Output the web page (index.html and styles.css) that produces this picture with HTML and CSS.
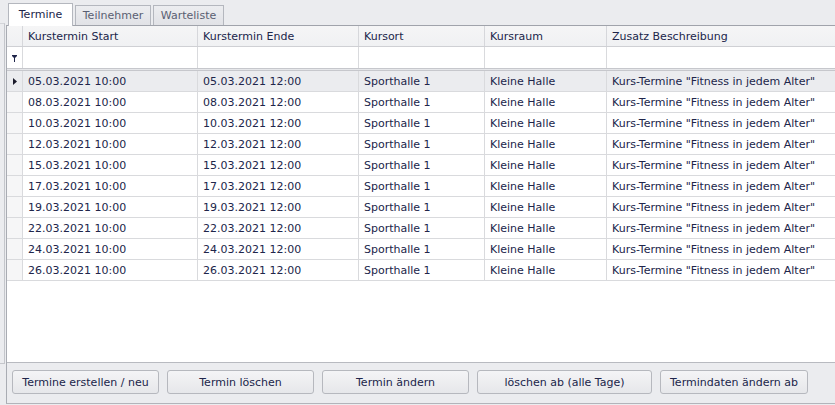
FILE: index.html
```html
<!DOCTYPE html>
<html lang="de">
<head>
<meta charset="utf-8">
<title>Termine</title>
<link rel="stylesheet" href="styles.css">
</head>
<body>
<div class="window">
  <div class="side"></div>
  <div class="main">
    <div class="tabs">
      <div class="tab active t1">Termine</div>
      <div class="tab t2">Teilnehmer</div>
      <div class="tab t3">Warteliste</div>
    </div>
    <div class="panel">
      <div class="grid">
        <div class="row head">
          <div class="cell ind"></div>
          <div class="cell">Kurstermin Start</div>
          <div class="cell">Kurstermin Ende</div>
          <div class="cell">Kursort</div>
          <div class="cell">Kursraum</div>
          <div class="cell">Zusatz Beschreibung</div>
        </div>
        <div class="row filter">
          <div class="cell ind"><svg width="5" height="7" viewBox="0 0 5 7"><polygon points="0,0 5,0 5,1 3,3 3,7 2,7 2,3 0,1" fill="#20254a"/></svg></div>
          <div class="cell"></div>
          <div class="cell"></div>
          <div class="cell"></div>
          <div class="cell"></div>
          <div class="cell"></div>
        </div>
        <div class="sep"></div>
        <div class="row data selected">
          <div class="cell ind"><svg width="4" height="7" viewBox="0 0 4 7"><polygon points="0,0 4,3.5 0,7" fill="#1a1a2a"/></svg></div>
          <div class="cell">05.03.2021 10:00</div><div class="cell">05.03.2021 12:00</div><div class="cell">Sporthalle 1</div><div class="cell">Kleine Halle</div><div class="cell">Kurs-Termine "Fitness in jedem Alter"</div>
        </div>
        <div class="row data">
          <div class="cell ind"></div>
          <div class="cell">08.03.2021 10:00</div><div class="cell">08.03.2021 12:00</div><div class="cell">Sporthalle 1</div><div class="cell">Kleine Halle</div><div class="cell">Kurs-Termine "Fitness in jedem Alter"</div>
        </div>
        <div class="row data">
          <div class="cell ind"></div>
          <div class="cell">10.03.2021 10:00</div><div class="cell">10.03.2021 12:00</div><div class="cell">Sporthalle 1</div><div class="cell">Kleine Halle</div><div class="cell">Kurs-Termine "Fitness in jedem Alter"</div>
        </div>
        <div class="row data">
          <div class="cell ind"></div>
          <div class="cell">12.03.2021 10:00</div><div class="cell">12.03.2021 12:00</div><div class="cell">Sporthalle 1</div><div class="cell">Kleine Halle</div><div class="cell">Kurs-Termine "Fitness in jedem Alter"</div>
        </div>
        <div class="row data">
          <div class="cell ind"></div>
          <div class="cell">15.03.2021 10:00</div><div class="cell">15.03.2021 12:00</div><div class="cell">Sporthalle 1</div><div class="cell">Kleine Halle</div><div class="cell">Kurs-Termine "Fitness in jedem Alter"</div>
        </div>
        <div class="row data">
          <div class="cell ind"></div>
          <div class="cell">17.03.2021 10:00</div><div class="cell">17.03.2021 12:00</div><div class="cell">Sporthalle 1</div><div class="cell">Kleine Halle</div><div class="cell">Kurs-Termine "Fitness in jedem Alter"</div>
        </div>
        <div class="row data">
          <div class="cell ind"></div>
          <div class="cell">19.03.2021 10:00</div><div class="cell">19.03.2021 12:00</div><div class="cell">Sporthalle 1</div><div class="cell">Kleine Halle</div><div class="cell">Kurs-Termine "Fitness in jedem Alter"</div>
        </div>
        <div class="row data">
          <div class="cell ind"></div>
          <div class="cell">22.03.2021 10:00</div><div class="cell">22.03.2021 12:00</div><div class="cell">Sporthalle 1</div><div class="cell">Kleine Halle</div><div class="cell">Kurs-Termine "Fitness in jedem Alter"</div>
        </div>
        <div class="row data">
          <div class="cell ind"></div>
          <div class="cell">24.03.2021 10:00</div><div class="cell">24.03.2021 12:00</div><div class="cell">Sporthalle 1</div><div class="cell">Kleine Halle</div><div class="cell">Kurs-Termine "Fitness in jedem Alter"</div>
        </div>
        <div class="row data">
          <div class="cell ind"></div>
          <div class="cell">26.03.2021 10:00</div><div class="cell">26.03.2021 12:00</div><div class="cell">Sporthalle 1</div><div class="cell">Kleine Halle</div><div class="cell">Kurs-Termine "Fitness in jedem Alter"</div>
        </div>
        <div class="empty"></div>
      </div>
      <div class="buttons">
        <button class="btn w147">Termine erstellen / neu</button>
        <button class="btn w147">Termin löschen</button>
        <button class="btn w147">Termin ändern</button>
        <button class="btn w175">löschen ab (alle Tage)</button>
        <button class="btn w148">Termindaten ändern ab</button>
      </div>
    </div>
  </div>
</div>
</body>
</html>
```

FILE: styles.css
```css
* { box-sizing: border-box; }
html, body { margin: 0; padding: 0; }
body {
  background: #ebecef;
  font-family: "DejaVu Sans", Verdana, sans-serif;
  font-size: 11px;
  color: #20254a;
  width: 835px;
  height: 405px;
  overflow: hidden;
}
.window {
  display: flex;
  height: 405px;
}
.side {
  width: 5px;
  margin-top: 23px;
  height: 341px;
  border-top: 1px solid #d3d5d9;
  border-right: 1px solid #c4c6cb;
  border-bottom: 1px solid #c4c6cb;
}
.main {
  flex: 1;
  display: flex;
  flex-direction: column;
  margin-left: 1px;
  min-width: 0;
}
.tabs {
  height: 25px;
  display: flex;
  align-items: flex-end;
  padding-left: 2px;
  gap: 2px;
}
.tab {
  height: 20px;
  padding: 0;
  text-align: center;
  line-height: 19px;
  border: 1px solid #b4b7be;
  border-bottom: none;
  background: linear-gradient(#ecedf0, #e1e2e6);
  color: #5a5f72;
  white-space: nowrap;
  overflow: hidden;
}
.t1 { width: 65px; }
.t2 { width: 76px; }
.t3 { width: 71px; }
.tab.active {
  height: 23px;
  margin-bottom: -1px;
  background: #ffffff;
  color: #20254a;
  line-height: 21px;
  position: relative;
  z-index: 1;
}
.panel {
  border-top: 1px solid #a0a3ab;
  border-left: 1px solid #a9acb3;
  border-bottom: 1px solid #b2b4ba;
  height: 379px;
  display: flex;
  flex-direction: column;
  background: #ffffff;
}
.grid {
  flex: 1;
  display: flex;
  flex-direction: column;
}
.row {
  display: grid;
  grid-template-columns: 16px 175px 161px 126px 122px 1fr;
}
.cell {
  border-right: 1px solid #d9dadd;
  padding-left: 5px;
  padding-top: 1px;
  white-space: nowrap;
  overflow: hidden;
}
.cell:last-child { border-right: none; }
.cell.ind {
  padding: 0;
  display: flex;
  align-items: center;
  justify-content: center;
}
.head {
  height: 21px;
  background: linear-gradient(#f5f5f6, #f0f1f3);
  border-bottom: 1px solid #cfd0d4;
  line-height: 19px;
}
.head .cell { border-right-color: #d6d7db; }
.filter {
  height: 21px;
  line-height: 19px;
}
.filter .cell.ind { padding-top: 1px; }
.sep {
  height: 3px;
  border-top: 1px solid #c6c7cc;
  border-bottom: 1px solid #c6c7cc;
  background: #e6e7ea;
}
.data {
  height: 21px;
  line-height: 19px;
  border-bottom: 1px solid #d9dadd;
}
.data .cell.ind { background: #f6f6f7; padding-top: 1px; }
.data.selected { background: #ebecef; }
.data.selected .cell.ind { background: #ebecef; }
.empty {
  flex: 1;
}
.buttons {
  border-top: 1px solid #b8bac0;
  background: #ebecef;
  padding: 7px 0 9px 5px;
  display: flex;
  gap: 8px;
  height: 41px;
}
.btn {
  height: 24px;
  font-family: inherit;
  font-size: 11px;
  color: #20254a;
  border: 1px solid #b6b8be;
  border-radius: 3px;
  background: linear-gradient(#f4f4f6, #e6e7ea);
  padding: 0;
  text-align: center;
}
.w147 { width: 147px; }
.w148 { width: 148px; }
.w175 { width: 175px; }
```
